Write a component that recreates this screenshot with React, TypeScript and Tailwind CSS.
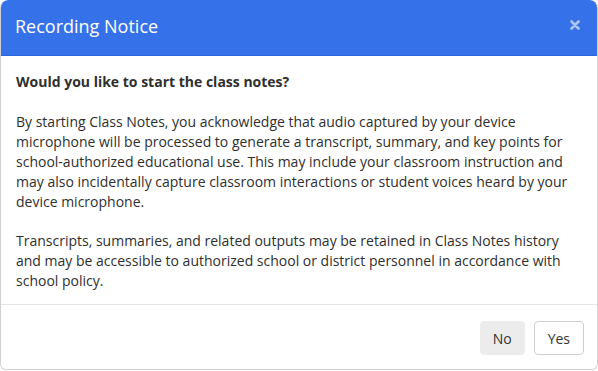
import React from 'react';

const RecordingNotice: React.FC = () => {
  return (
    <div className="w-[598px] h-[371px] bg-white" style={{ fontFamily: '"Open Sans", "Noto Sans", sans-serif' }}>
      <div className="w-[598px] h-[370px] flex flex-col rounded-t-[8px] rounded-b-[6px] border border-t-0 border-[#d2d2d2] overflow-hidden bg-white">
        {/* Header */}
        <div className="h-[56px] -mx-px shrink-0 flex items-center justify-between pl-[15px] pr-[18px] bg-[#3571e8] border-b border-[#2d66dc] rounded-t-[8px]">
          <h2 className="text-[18px] text-white leading-none pb-[3px]">Recording Notice</h2>
          <button className="text-white/60 pb-[5px]" aria-label="Close">
            <svg width="10" height="10" viewBox="0 0 10 10">
              <path d="M1.5 1.5 L8.5 8.5 M8.5 1.5 L1.5 8.5" stroke="currentColor" strokeWidth="2.6" strokeLinecap="round" />
            </svg>
          </button>
        </div>

        {/* Body */}
        <div className="px-[15px] pt-[16px] pb-[13px] text-[14px] leading-[20px] text-[#2f2f2f]">
          <p className="font-bold">Would you like to start the class notes?</p>
          <p className="mt-[20px]">
            By starting Class Notes, you acknowledge that audio captured by your device microphone will be processed to
            generate a transcript, summary, and key points for school-authorized educational use. This may include your
            classroom instruction and may also incidentally capture classroom interactions or student voices heard by
            your device microphone.
          </p>
          <p className="mt-[19px]">
            Transcripts, summaries, and related outputs may be retained in Class Notes history and may be accessible to
            authorized school or district personnel in accordance with school policy.
          </p>
        </div>

        {/* Footer */}
        <div className="border-t border-[#e5e5e5] flex justify-end gap-[9px] pt-[16px] pr-[13px]">
          <button className="h-[34px] px-[12px] rounded-[4px] bg-[#ececec] border border-[#ececec] text-[14px] text-[#333]">
            No
          </button>
          <button className="h-[34px] px-[13px] rounded-[4px] bg-white border border-[#cfcfcf] text-[14px] text-[#333]">
            Yes
          </button>
        </div>
      </div>
    </div>
  );
};

export default function App() {
  return <RecordingNotice />;
}
